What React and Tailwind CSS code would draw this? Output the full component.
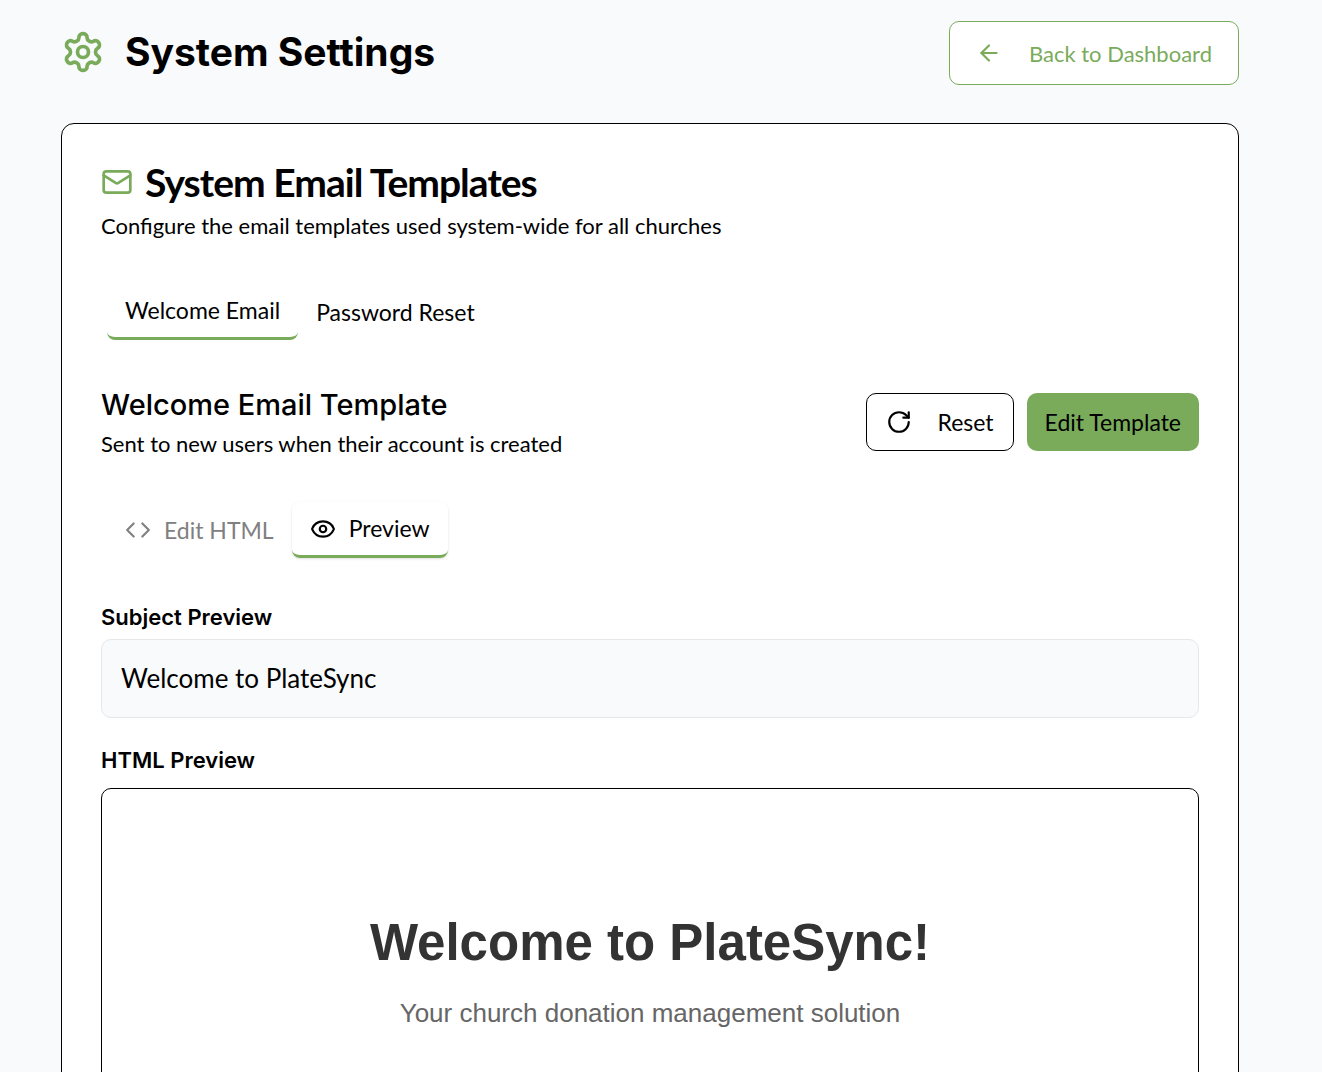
import { ArrowLeft, Mail, RotateCw, Code, Eye } from "lucide-react";

function GearIcon({ className }) {
  return (
    <svg viewBox="0 0 24 24" fill="none" stroke="currentColor" strokeWidth="2" strokeLinecap="round" strokeLinejoin="round" className={className} aria-hidden="true">
      <path d="M12.22 2h-.44a2 2 0 0 0-2 2v.18a2 2 0 0 1-1 1.73l-.43.25a2 2 0 0 1-2 0l-.15-.08a2 2 0 0 0-2.73.73l-.22.38a2 2 0 0 0 .73 2.73l.15.1a2 2 0 0 1 1 1.72v.51a2 2 0 0 1-1 1.74l-.15.09a2 2 0 0 0-.73 2.73l.22.38a2 2 0 0 0 2.73.73l.15-.08a2 2 0 0 1 2 0l.43.25a2 2 0 0 1 1 1.73V20a2 2 0 0 0 2 2h.44a2 2 0 0 0 2-2v-.18a2 2 0 0 1 1-1.73l.43-.25a2 2 0 0 1 2 0l.15.08a2 2 0 0 0 2.73-.73l.22-.39a2 2 0 0 0-.73-2.73l-.15-.08a2 2 0 0 1-1-1.74v-.5a2 2 0 0 1 1-1.74l.15-.09a2 2 0 0 0 .73-2.73l-.22-.38a2 2 0 0 0-2.73-.73l-.15.08a2 2 0 0 1-2 0l-.43-.25a2 2 0 0 1-1-1.73V4a2 2 0 0 0-2-2z" />
      <circle cx="12" cy="12" r="3" />
    </svg>
  );
}

export default function App() {
  return (
    <div className="h-screen overflow-hidden bg-[#f9fafc] pt-[21px] pr-[83px] pl-[61px] font-['Lato',sans-serif] text-black">
      <header className="flex items-center justify-between">
        <div className="flex items-center gap-5 pb-[2px]">
          <GearIcon className="size-11 text-[#7aab5b]" />
          <h1 className="font-['Inter',sans-serif] text-[39px] leading-[48px] font-bold">System Settings</h1>
        </div>
        <button className="flex h-16 items-center gap-[27px] rounded-[10px] border border-[#7aab5b] bg-white px-[26px] text-[22px] text-[#7aab5b]">
          <ArrowLeft size={26} />
          Back to Dashboard
        </button>
      </header>

      <main className="mt-[38px] rounded-[13px] border border-black bg-white px-[39px] pt-[34px] pb-10">
        <div className="flex items-center gap-3">
          <Mail size={32} className="text-[#7aab5b]" />
          <h2 className="text-[39px] leading-[48px] font-bold tracking-tight">System Email Templates</h2>
        </div>
        <p className="text-[22px] leading-10">Configure the email templates used system-wide for all churches</p>

        <div role="tablist" className="mt-[38px] flex px-[6px]">
          <button role="tab" aria-selected="true" className="h-[56px] rounded-lg border-b-[3px] border-[#7aab5b] px-[18px] text-[23px]">Welcome Email</button>
          <button role="tab" aria-selected="false" className="h-[56px] px-[18px] text-[23px]">Password Reset</button>
        </div>

        <div className="mt-[45px] flex items-start justify-between">
          <div>
            <h3 className="font-['Inter',sans-serif] text-[29px] leading-10 font-medium">Welcome Email Template</h3>
            <p className="text-[22px] leading-[38px]">Sent to new users when their account is created</p>
          </div>
          <div className="mt-2 flex gap-[13px]">
            <button className="flex h-[58px] items-center gap-[26px] rounded-[10px] border border-black px-[19px] text-[23px]">
              <RotateCw size={26} />
              Reset
            </button>
            <button className="h-[58px] rounded-[10px] bg-[#7aab5b] px-[18px] text-[23px]">Edit Template</button>
          </div>
        </div>

        <div role="tablist" className="mt-[39px] flex px-[6px]">
          <button role="tab" aria-selected="false" className="flex h-[56px] items-center gap-[13px] px-[18px] text-[23px] text-[#808080]">
            <Code size={26} />
            Edit HTML
          </button>
          <button role="tab" aria-selected="true" className="flex h-[56px] items-center gap-[13px] rounded-lg border-b-[3px] border-[#7aab5b] px-[18px] text-[23px] shadow-sm">
            <Eye size={26} />
            Preview
          </button>
        </div>

        <h4 className="mt-[43px] font-['Inter',sans-serif] text-[22px] leading-8 font-semibold">Subject Preview</h4>
        <div className="mt-[6px] rounded-[10px] border border-gray-200 bg-[#f9fafc] px-[19px] py-[19px] text-[26px] leading-[39px]">Welcome to PlateSync</div>

        <h4 className="mt-[26px] font-['Inter',sans-serif] text-[22px] leading-8 font-semibold">HTML Preview</h4>
        <div className="mt-3 rounded-[10px] border border-black px-5 pt-[122px] pb-24 text-center font-['Liberation_Sans',sans-serif]">
          <h1 className="text-[51px] leading-[64px] font-bold text-[#333]">Welcome to PlateSync!</h1>
          <p className="mt-[18px] text-[26px] leading-10 text-[#666]">Your church donation management solution</p>
        </div>
      </main>
    </div>
  );
}
